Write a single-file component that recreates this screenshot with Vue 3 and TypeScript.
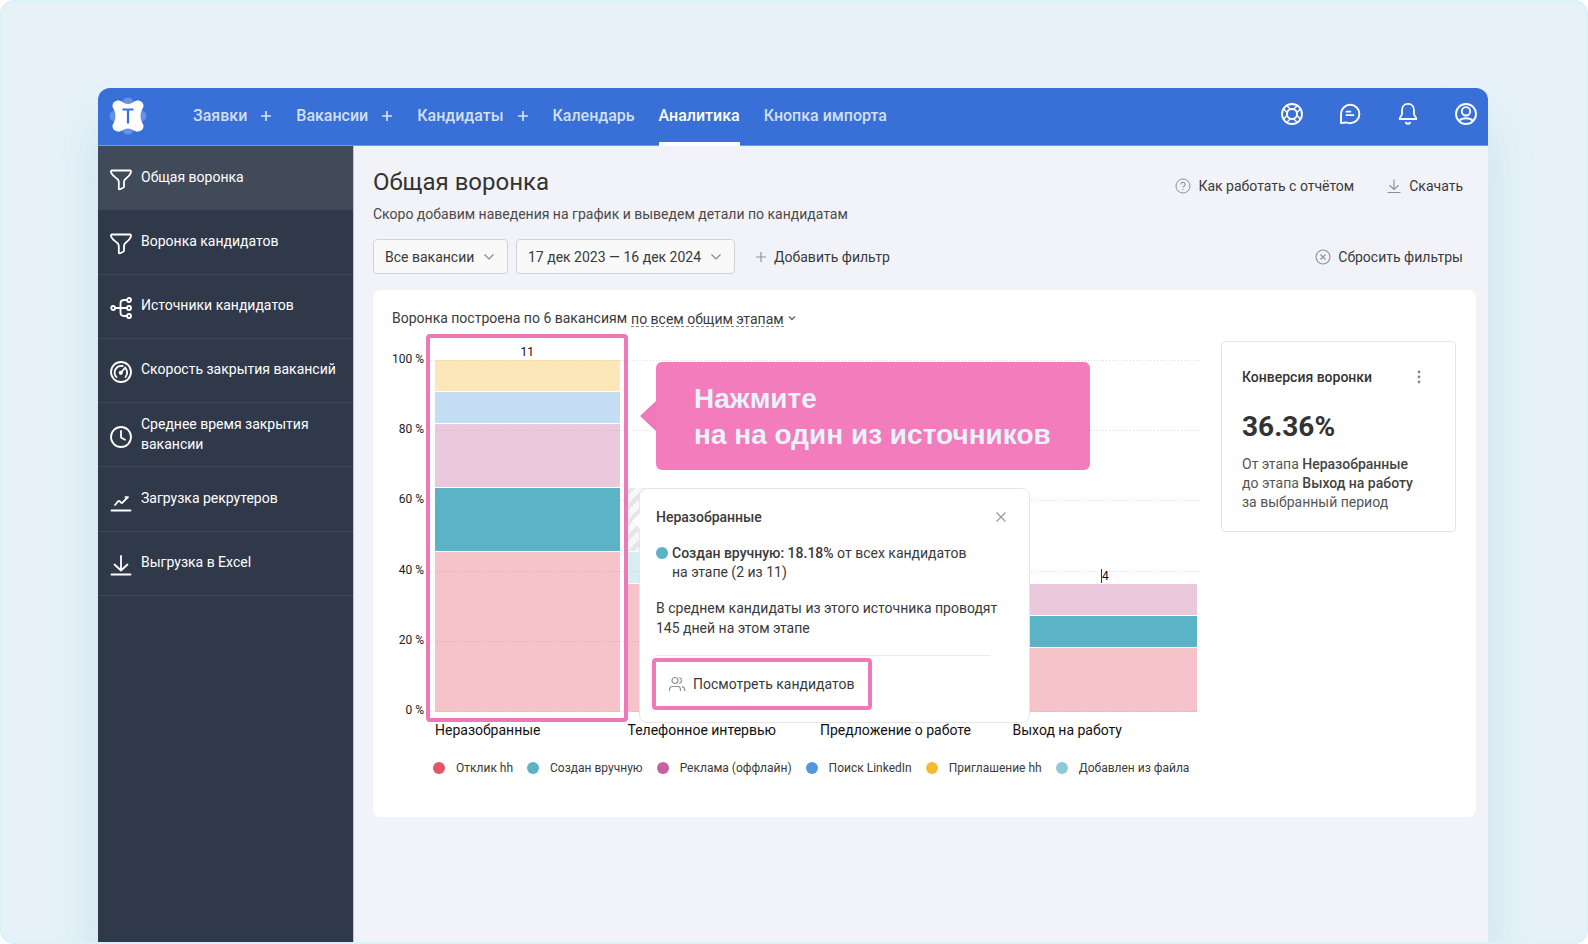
<script setup lang="ts">
interface NavItem { label: string; plus?: boolean; active?: boolean }
interface SideItem { label: string; icon: string }
interface Segment { kind: string; share: number }
interface Stage { name: string; total: string; marker?: boolean; segments: Segment[] }

const nav: NavItem[] = [
  { label: 'Заявки', plus: true },
  { label: 'Вакансии', plus: true },
  { label: 'Кандидаты', plus: true },
  { label: 'Календарь' },
  { label: 'Аналитика', active: true },
  { label: 'Кнопка импорта' },
]

const side: SideItem[] = [
  { label: 'Общая воронка', icon: 'funnel' },
  { label: 'Воронка кандидатов', icon: 'funnel' },
  { label: 'Источники кандидатов', icon: 'tree' },
  { label: 'Скорость закрытия вакансий', icon: 'gauge' },
  { label: 'Среднее время закрытия вакансии', icon: 'clock' },
  { label: 'Загрузка рекрутеров', icon: 'trend' },
  { label: 'Выгрузка в Excel', icon: 'download' },
]

const base = 11
const ticks = [100, 80, 60, 40, 20, 0]

const stages: Stage[] = [
  {
    name: 'Неразобранные', total: '11',
    segments: [
      { kind: 'invite', share: 1 },
      { kind: 'linkedin', share: 1 },
      { kind: 'ads', share: 2 },
      { kind: 'manual', share: 2 },
      { kind: 'reply', share: 5 },
    ],
  },
  {
    name: 'Телефонное интервью', total: '',
    segments: [
      { kind: 'hatched', share: 2 },
      { kind: 'file', share: 1 },
      { kind: 'reply', share: 4 },
    ],
  },
  { name: 'Предложение о работе', total: '', segments: [] },
  {
    name: 'Выход на работу', total: '4', marker: true,
    segments: [
      { kind: 'ads', share: 1 },
      { kind: 'manual', share: 1 },
      { kind: 'reply', share: 2 },
    ],
  },
]

const legend = [
  { kind: 'reply', label: 'Отклик hh' },
  { kind: 'manual', label: 'Создан вручную' },
  { kind: 'ads', label: 'Реклама (оффлайн)' },
  { kind: 'linkedin', label: 'Поиск LinkedIn' },
  { kind: 'invite', label: 'Приглашение hh' },
  { kind: 'file', label: 'Добавлен из файла' },
]

const height = (share: number): string => `${(share / base) * 100}%`
</script>

<template>
  <div class="stage">
    <div class="window">
      <header class="top">
        <a href="#" class="logo" aria-label="Главная">
          <svg width="40" height="40" viewBox="0 0 40 40">
            <g fill="#7ba0e8" opacity=".7">
              <circle cx="20" cy="7" r="5.5" /><circle cx="20" cy="33" r="5.5" />
              <circle cx="7" cy="20" r="5.5" /><circle cx="33" cy="20" r="5.5" />
            </g>
            <path fill="#fff" d="M9.500 4.500C12 4 14 5.500 16 7q4 2 8 0c2-1.500 4-3 6.500-2.500 3 .5 5 2.500 5 5.200 0 2-1.200 3.300-2 5q-2 5.300 0 10.600c.8 1.700 2 3 2 5 0 2.700-2 4.700-5 5.200-2.500.5-4.500-1-6.500-2q-4-1.800-8 0c-2 1-4 2.500-6.500 2-3-.5-5-2.500-5-5.200 0-2 1.200-3.300 2-5q2-5.300 0-10.600c-.8-1.700-2-3-2-5 0-2.700 2-4.700 5-5.200z" />
            <path d="M14.500 13.500h11M20 13.500V27.500" stroke="#3870d8" stroke-width="2.200" fill="none" />
          </svg>
        </a>
        <nav class="nav">
          <div v-for="n in nav" :key="n.label" class="nav-group">
            <a href="#" class="nav-link" :class="{ active: n.active }">{{ n.label }}</a>
            <button v-if="n.plus" type="button" class="plus" :aria-label="'Добавить: ' + n.label">
              <svg width="12" height="12" viewBox="0 0 12 12"><path d="M6 1v10M1 6h10" stroke="#d7e2f8" stroke-width="1.700" /></svg>
            </button>
          </div>
        </nav>
        <div class="tools">
          <button type="button" aria-label="Помощь">
            <svg width="24" height="24" viewBox="0 0 24 24" fill="none" stroke="#fff" stroke-width="1.900">
              <circle cx="12" cy="12" r="10" /><circle cx="12" cy="12" r="5" />
              <g stroke-width="1.400">
                <path v-for="r in [45, 135, 225, 315]" :key="r" d="M9.700 2.500V7.500M14.300 2.500V7.500" :transform="`rotate(${r} 12 12)`" />
              </g>
            </svg>
          </button>
          <button type="button" aria-label="Сообщения">
            <svg width="24" height="24" viewBox="0 0 24 24" fill="none" stroke="#fff" stroke-width="1.900" stroke-linecap="round" stroke-linejoin="round">
              <path d="M3 21V12a9.200 9.200 0 1 1 9.200 9.200q-2.200 0-3.700-.7z" />
              <path d="M8.500 9.700h4M8.500 13.200h7" stroke-width="1.700" />
            </svg>
          </button>
          <button type="button" aria-label="Уведомления">
            <svg width="24" height="24" viewBox="0 0 24 24" fill="none" stroke="#fff" stroke-width="1.800" stroke-linecap="round" stroke-linejoin="round">
              <path d="M12 1.900c-4 0-6 3-6 6.300v3.600c0 2-2.300 3-2.300 5.200h16.600c0-2.200-2.300-3.200-2.300-5.200V8.200c0-3.300-2-6.300-6-6.300z" />
              <path d="M10 20.800q2 2 4 0" stroke-width="2" />
            </svg>
          </button>
          <button type="button" aria-label="Профиль">
            <svg width="24" height="24" viewBox="0 0 24 24" fill="none" stroke="#fff" stroke-width="1.900">
              <circle cx="12" cy="12" r="10" /><circle cx="12" cy="9.300" r="4.200" />
              <path d="M5 18.800c2-2 4-2.600 7-2.600s5 .6 7 2.600" />
            </svg>
          </button>
        </div>
      </header>

      <div class="body">
        <aside class="side">
          <nav class="side-list">
            <a v-for="(s, i) in side" :key="s.label" href="#" class="side-item" :class="{ current: i === 0 }">
              <svg class="side-icon" width="24" height="24" viewBox="0 0 24 24" fill="none" stroke="#fff" stroke-width="1.800" stroke-linecap="round" stroke-linejoin="round">
                <path v-if="s.icon === 'funnel'" d="M3 2.500h18q1.200 0 1 1.300c-.3 3-3.500 5.200-6 7.700-.8.800-1 1.500-1 2.500v4.500q0 .8-.8 1.200l-3.200 1.500q-1.200.4-1.200-.8V14c0-1-.2-1.700-1-2.500C6.300 9 2.300 6.800 2 3.800q-.2-1.300 1-1.300z" />
                <g v-else-if="s.icon === 'tree'" stroke-width="1.800">
                  <circle cx="4.200" cy="12" r="2" /><circle cx="20" cy="4" r="2" />
                  <circle cx="20" cy="12" r="2" /><circle cx="20" cy="20" r="2" />
                  <path d="M6.200 12H18M18 4h-3q-3.500 0-3.500 3.500v9q0 3.500 3.500 3.500h3" />
                </g>
                <g v-else-if="s.icon === 'gauge'">
                  <circle cx="12" cy="12" r="10" />
                  <path d="M7.500 17a6.600 6.600 0 0 1 6.200-11M17 8.800q2.500 4.500-.5 8.200" />
                  <path d="M12 12.500 16.300 7.500" /><circle cx="11.800" cy="12.800" r="1.200" />
                </g>
                <g v-else-if="s.icon === 'clock'">
                  <circle cx="12" cy="12" r="10" /><path d="M12 6v6.500l4 2.300" />
                </g>
                <path v-else-if="s.icon === 'trend'" d="M2.500 21.500h19M6 16l3.300-3.800q.6-.5 1.200 0l1.700 1.500q.6.500 1.200 0L18.500 8.500M16.500 8.200h2.500" />
                <path v-else d="M2.500 21.500h19M12 3v14.500M5.500 11.500l6.500 6 6.500-6" />
              </svg>
              <span>{{ s.label }}</span>
            </a>
          </nav>
        </aside>

        <main class="main">
          <div class="head">
            <div>
              <h1>Общая воронка</h1>
              <p class="sub">Скоро добавим наведения на график и выведем детали по кандидатам</p>
            </div>
            <div class="head-actions">
              <button type="button" class="ghost">
                <svg width="16" height="16" viewBox="0 0 16 16" fill="none" stroke="#8e9299" stroke-width="1">
                  <circle cx="8" cy="8" r="7" /><path d="M5.900 6.500a2.100 2.100 0 1 1 3.200 1.700Q8 8.700 8 9.600M8 11v1" stroke-width="1.100" />
                </svg>
                Как работать с отчётом
              </button>
              <button type="button" class="ghost">
                <svg width="16" height="16" viewBox="0 0 16 16" fill="none" stroke="#8e9299" stroke-width="1.200"><path d="M1.500 14.500h13M8 1.500v10M3.500 7.200 8 11.500l4.500-4.300" /></svg>
                Скачать
              </button>
            </div>
          </div>

          <div class="filters">
            <span class="pick">
              <select aria-label="Вакансии"><option>Все вакансии</option></select>
              <svg class="chev" width="12" height="12" viewBox="0 0 12 12"><path d="M1.500 3.500 6 8l4.500-4.500" fill="none" stroke="#85898f" stroke-width="1.200" /></svg>
            </span>
            <span class="pick">
              <select aria-label="Период"><option>17 дек 2023 — 16 дек 2024</option></select>
              <svg class="chev" width="12" height="12" viewBox="0 0 12 12"><path d="M1.500 3.500 6 8l4.500-4.500" fill="none" stroke="#85898f" stroke-width="1.200" /></svg>
            </span>
            <button type="button" class="ghost add">
              <svg width="12" height="12" viewBox="0 0 12 12"><path d="M6 1v10M1 6h10" stroke="#8e9299" stroke-width="1.200" /></svg>
              Добавить фильтр
            </button>
            <button type="button" class="ghost reset">
              <svg width="16" height="16" viewBox="0 0 16 16" fill="none" stroke="#8e9299" stroke-width="1.100"><circle cx="8" cy="8" r="7" /><path d="m5.500 5.500 5 5M10.500 5.500l-5 5" /></svg>
              Сбросить фильтры
            </button>
          </div>

          <section class="card">
            <div class="built">
              <label for="stages">Воронка построена по 6 вакансиям</label>
              <select id="stages"><option>по всем общим этапам</option></select>
              <svg width="8" height="8" viewBox="0 0 8 8"><path d="M1 2.500 4 5.500l3-3" fill="none" stroke="#666" stroke-width="1.300" /></svg>
            </div>

            <div class="columns">
              <div class="chart">
                <div class="axis">
                  <span v-for="t in ticks" :key="t">{{ t }} %</span>
                </div>
                <div class="plot">
                  <div class="grid"><i v-for="t in ticks" :key="t" /></div>
                  <div class="bars">
                    <div v-for="st in stages" :key="st.name" class="bar">
                      <div v-if="st.total" class="total"><span :class="{ marker: st.marker }">{{ st.total }}</span></div>
                      <div v-for="(g, k) in st.segments" :key="k" class="seg" :class="g.kind" :style="{ height: height(g.share) }" />
                    </div>
                  </div>
                  <div class="frame" />

                  <div class="callout">Нажмите<br>на на один из источников</div>

                  <div class="tip" role="dialog" aria-label="Неразобранные">
                    <div class="tip-head">
                      <b>Неразобранные</b>
                      <button type="button" aria-label="Закрыть">
                        <svg width="12" height="12" viewBox="0 0 12 12"><path d="m1.500 1.500 9 9M10.500 1.500l-9 9" stroke="#9a9da3" stroke-width="1.300" /></svg>
                      </button>
                    </div>
                    <div class="tip-source">
                      <i class="dot manual-dot" />
                      <span><b>Создан вручную: 18.18%</b> от всех кандидатов<br>на этапе (2 из 11)</span>
                    </div>
                    <p>В среднем кандидаты из этого источника проводят<br>145 дней на этом этапе</p>
                    <button type="button" class="people">
                      <svg width="18" height="16" viewBox="0 0 18 16" fill="none" stroke="#8e9299" stroke-width="1.200">
                        <circle cx="7" cy="4.500" r="3" /><path d="M1.500 15v-1.500q0-3 3-3h5q3 0 3 3V15M11.300 1.600q2.300.7 2.300 2.900t-2.300 2.900M13.800 10.600q2.900.5 2.900 3V15" />
                      </svg>
                      Посмотреть кандидатов
                    </button>
                  </div>
                </div>
                <div class="names">
                  <span v-for="st in stages" :key="st.name">{{ st.name }}</span>
                </div>
                <ul class="legend">
                  <li v-for="l in legend" :key="l.kind"><i class="dot" :class="l.kind + '-dot'" />{{ l.label }}</li>
                </ul>
              </div>

              <article class="conv">
                <div class="conv-head">
                  <h2>Конверсия воронки</h2>
                  <button type="button" aria-label="Меню">
                    <svg width="4" height="14" viewBox="0 0 4 14" fill="#85898f"><circle cx="2" cy="2" r="1.400" /><circle cx="2" cy="7" r="1.400" /><circle cx="2" cy="12" r="1.400" /></svg>
                  </button>
                </div>
                <strong>36.36%</strong>
                <p>От этапа <b>Неразобранные</b><br>до этапа <b>Выход на работу</b><br>за выбранный период</p>
              </article>
            </div>
          </section>
        </main>
      </div>
    </div>
  </div>
</template>

<style>
html, body, #app { height: 100%; }
body { margin: 0; background: #fff; }
</style>

<style scoped>
* { box-sizing: border-box; }
.stage {
  display: flex;
  min-height: 100%;
  padding: 86px 98px 0 96px;
  border: 2px solid #daf2f9;
  border-radius: 14px;
  background: #e6f2f8;
  overflow: hidden;
  font: 14px/20px Roboto, "Noto Sans", sans-serif;
  color: #3a3a3a;
}
button, select {
  margin: 0;
  padding: 0;
  border: 0;
  background: none;
  font: inherit;
  color: inherit;
  appearance: none;
  cursor: pointer;
}
button { display: inline-flex; align-items: center; }
a { text-decoration: none; color: inherit; }
svg { display: block; flex: none; }
b { font-weight: 500; }
h1, h2, p, ul { margin: 0; padding: 0; }

.window {
  flex: 1;
  display: flex;
  flex-direction: column;
  border-radius: 12px 12px 0 0;
  box-shadow: 0 36px 50px rgba(80, 150, 195, .18);
}
.top {
  display: flex;
  height: 58px;
  padding: 0 10px;
  border-bottom: 1px solid #6f98e6;
  border-radius: 12px 12px 0 0;
  background: #3870d8;
}
.logo { align-self: center; width: 85px; padding-bottom: 2px; }
.nav { display: flex; gap: 24px; }
.nav-group { display: flex; gap: 13px; }
.nav-link {
  display: flex;
  align-items: center;
  margin-bottom: -1px;
  padding-top: 2px;
  border-bottom: 4px solid transparent;
  font-size: 16px;
  font-weight: 500;
  color: #d2dff7;
}
.plus { padding-bottom: 2px; }
.nav-link.active { border-color: #fff; color: #fff; }
.tools { display: flex; gap: 34px; margin-left: auto; align-items: center; padding-bottom: 5px; }

.body { flex: 1; display: flex; }
.side { flex: none; width: 256px; background: #30394a; border-right: 1px solid #bfc4cc; }
.side-list { display: grid; grid-auto-rows: 1fr; height: 450px; }
.side-item {
  display: flex;
  align-items: center;
  gap: 8px;
  padding: 0 10px 2px 11px;
  border-bottom: 1px solid #3f4858;
  color: #fff;
}
.side-item.current { background: #414a59; }
.side-icon { margin-top: 6px; }

.main { flex: 1; min-width: 0; padding: 20px 12px 20px 19px; background: #f2f3f8; }
.head { display: flex; justify-content: space-between; padding-right: 13px; }
h1 { font-size: 24px; line-height: 32px; font-weight: 400; color: #333; }
.sub { margin-top: 6px; color: #4a4a4a; }
.head-actions { display: flex; gap: 32px; align-self: flex-start; margin-top: 10px; }
.ghost { gap: 7px; }
.filters { display: flex; align-items: center; gap: 8px; height: 35px; margin-top: 15px; padding-right: 13px; }
.pick { position: relative; display: flex; }
.pick select {
  height: 35px;
  padding: 0 32px 0 11px;
  border: 1px solid #cfd3d6;
  border-radius: 4px;
  background: #f9f9f9;
}
.chev { position: absolute; right: 13px; top: 12px; pointer-events: none; }
.add { margin-left: 12px; }
.reset { margin-left: auto; }

.card { margin-top: 16px; padding: 18px 20px 40px 19px; border-radius: 8px; background: #fff; }
.built { display: flex; align-items: center; gap: 4px; height: 20px; }
.built select { height: 18px; border-bottom: 1px dashed #888; }

.columns { display: flex; align-items: flex-start; gap: 21px; margin-top: 13px; }
.chart {
  flex: 1;
  min-width: 0;
  display: grid;
  grid-template-columns: 39px minmax(0, 1fr);
  padding-top: 19px;
}
.axis {
  display: flex;
  flex-direction: column;
  justify-content: space-between;
  height: 371px;
  margin: -11px 7px -19px -6px;
  font-size: 12px;
  color: #222;
  text-align: right;
}
.plot { position: relative; height: 352px; }
.grid { position: absolute; inset: 0; display: flex; flex-direction: column; justify-content: space-between; }
.grid i { height: 1px; background: repeating-linear-gradient(90deg, #dcdcdc 0 1px, transparent 1px 3px); }
.bars, .names { display: grid; grid-template-columns: repeat(4, minmax(0, 1fr)); column-gap: 8px; padding: 0 3px 0 4px; }
.bars { position: relative; height: 352px; }
.bar { display: flex; flex-direction: column; justify-content: flex-end; height: 352px; }
.total { height: 16px; margin-top: -16px; font-size: 12px; line-height: 17px; text-align: center; color: #111; }
.marker { border-left: 1px solid #333; }
.seg { flex: none; border-bottom: 1px solid #fff; }
.seg:first-of-type { border-radius: 2px 2px 0 0; }
.seg:last-child { border-bottom: 0; }
.invite { background: rgba(244, 186, 48, .35); }
.linkedin { background: rgba(81, 152, 222, .34); }
.ads { background: rgba(199, 99, 156, .35); }
.manual { background: #5bb3c6; }
.reply { background: rgba(228, 83, 104, .35); }
.file { background: rgba(141, 203, 214, .35); }
.hatched { background: repeating-linear-gradient(135deg, #e6e6e6 0 5px, #f8f8f8 5px 11px); }

.frame { position: absolute; left: -5px; top: -26px; width: calc(25% + 10px); bottom: -10px; border: 4px solid #ee78b8; border-radius: 4px; }
.callout {
  position: absolute;
  left: 225px;
  top: 2px;
  width: 434px;
  padding: 19px 38px 17px;
  border-radius: 6px;
  background: rgba(239, 98, 174, .83);
  font: bold 28px/36px "Liberation Sans", Arial, sans-serif;
  color: #e8f3fa;
  white-space: nowrap;
}
.callout::before {
  content: "";
  position: absolute;
  left: -16px;
  top: 39px;
  border: 15px solid transparent;
  border-left: 0;
  border-right: 16px solid #ee78b8;
}

.tip {
  position: absolute;
  left: 208px;
  top: 128px;
  width: 391px;
  height: 235px;
  padding: 18px 16px 0;
  border: 1px solid #e6e6e6;
  border-radius: 8px;
  background: #fff;
}
.tip::before {
  content: "";
  position: absolute;
  left: -8px;
  top: 24px;
  border: 8px solid transparent;
  border-left: 0;
  border-right-color: #fff;
}
.tip-head { display: flex; justify-content: space-between; align-items: center; padding-right: 6px; }
.tip-source { display: flex; gap: 4px; margin-top: 17px; line-height: 19px; }
.tip-source .dot { margin-top: 3px; }
.tip p { margin: 16px 0 0; padding-bottom: 17px; border-bottom: 1px solid #ececec; width: 334px; white-space: nowrap; }
.people { gap: 7px; margin: 2px 0 0 -4px; width: 220px; height: 52px; padding: 0 12px; border: 4px solid #ee78b8; border-radius: 4px; }

.names { grid-column: 2; margin-top: 8px; color: #111; white-space: nowrap; }
.dot { flex: none; width: 12px; height: 12px; border-radius: 50%; }
.legend { grid-column: 2; display: flex; gap: 14px; margin: 19px 0 0 2px; list-style: none; font-size: 12px; line-height: 18px; white-space: nowrap; }
.legend li { display: flex; align-items: center; gap: 11px; }
.reply-dot { background: #e45368; }
.manual-dot { background: #5bb3c6; }
.ads-dot { background: #c7639c; }
.linkedin-dot { background: #5198de; }
.invite-dot { background: #f4ba30; }
.file-dot { background: #8dcbd6; }

.conv { flex: none; width: 235px; padding: 25px 20px 19px; border: 1px solid #e4e4e4; border-radius: 4px; }
.conv-head { display: flex; justify-content: space-between; align-items: center; padding-right: 14px; }
h2 { font-size: 14px; line-height: 20px; font-weight: 500; color: #333; }
.conv strong { display: block; margin-top: 22px; font-size: 28px; line-height: 36px; font-weight: 700; color: #333; }
.conv p { margin-top: 10px; line-height: 19px; color: #555; }
.conv b { color: #444; }
</style>
